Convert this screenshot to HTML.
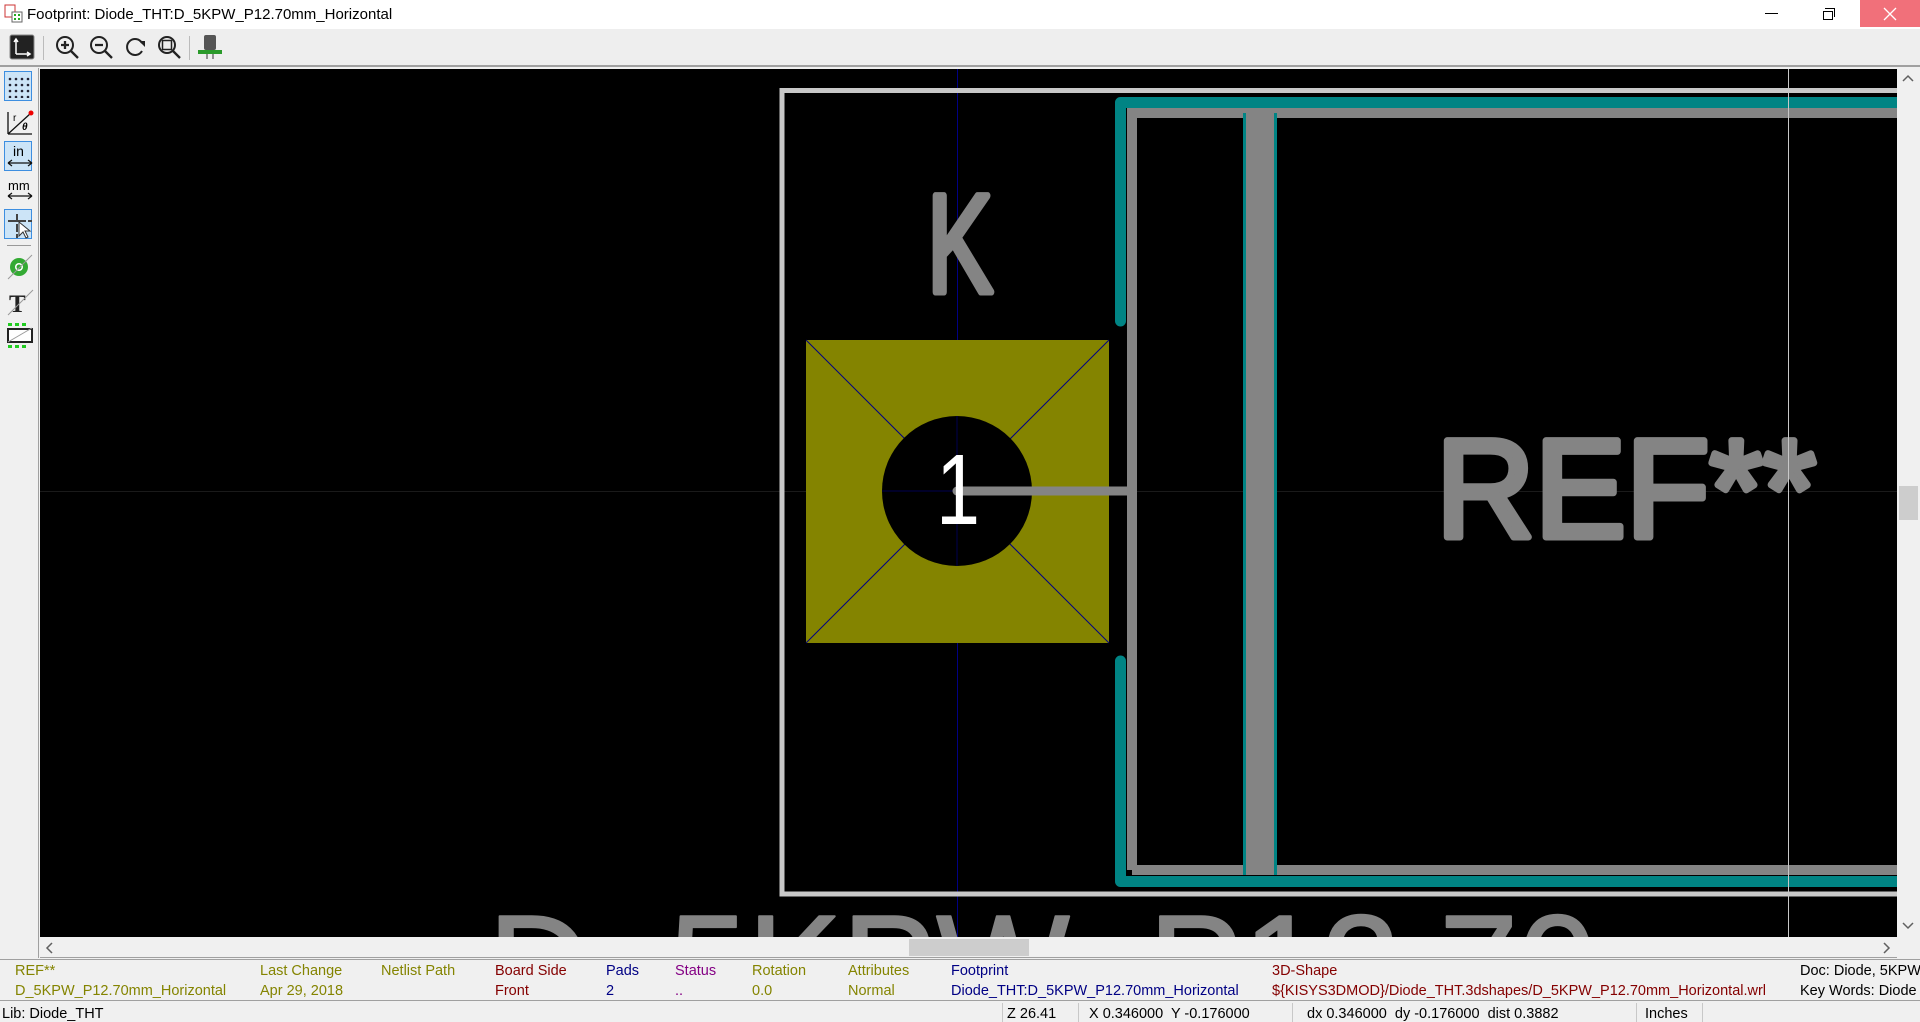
<!DOCTYPE html>
<html><head><meta charset="utf-8">
<style>
*{margin:0;padding:0;box-sizing:border-box}
body{width:1920px;height:1022px;overflow:hidden;background:#f0f0f0;font-family:"Liberation Sans",sans-serif;position:relative}
.abs{position:absolute}
.title{left:0;top:0;width:1920px;height:29px;background:#fff}
.title span{position:absolute;left:27px;top:6px;font-size:15px;color:#000}
.tb{left:0;top:29px;width:1920px;height:38px;background:#eeeeee;border-bottom:2px solid #a0a0a0}
.lt{left:0;top:68px;width:39px;height:890px;background:#f0f0f0;border-right:1px solid #a0a0a0}
.sel{position:absolute;left:4px;width:28px;height:30px;background:#cce4f7;border:1px solid #3d8ee0}
.st{position:absolute;font-size:14.5px;white-space:nowrap}
</style></head><body>
<div class="abs title">
 <svg class="abs" style="left:4px;top:4px" width="20" height="20"><rect x="1" y="1" width="10" height="12" fill="none" stroke="#c33" stroke-width="1"/><rect x="8" y="8" width="10" height="10" fill="#fff" stroke="#666"/><rect x="10" y="10" width="2" height="2" fill="#2a2"/><rect x="14" y="10" width="2" height="2" fill="#2a2"/><rect x="10" y="14" width="2" height="2" fill="#2a2"/><rect x="14" y="14" width="2" height="2" fill="#2a2"/></svg>
 <span>Footprint: Diode_THT:D_5KPW_P12.70mm_Horizontal</span>
 <div class="abs" style="left:1765px;top:13px;width:13px;height:1px;background:#000"></div>
 <div class="abs" style="left:1823px;top:11px;width:10px;height:9px;border:1px solid #000;background:#fff"></div>
 <div class="abs" style="left:1825px;top:8px;width:10px;height:9px;border-top:1px solid #000;border-right:1px solid #000"></div>
 <div class="abs" style="left:1860px;top:0;width:60px;height:27px;background:#f1707a"></div>
 <svg class="abs" style="left:1882px;top:6px" width="16" height="16"><path d="M2 2L14 14M14 2L2 14" stroke="#fff" stroke-width="1.3"/></svg>
</div>
<div class="abs tb">
 <svg class="abs" style="left:9px;top:5px" width="26" height="26"><rect x="1" y="1" width="24" height="24" rx="2" fill="#222" stroke="#888"/><path d="M7 20V6M5 8l2-3 2 3M7 20h13M18 18l3 2-3 2" stroke="#fff" stroke-width="1.5" fill="none"/></svg>
 <div class="abs" style="left:43px;top:7px;width:1px;height:24px;background:#bbb"></div>
 <svg class="abs" style="left:55px;top:6px" width="26" height="26"><circle cx="10" cy="10" r="8" fill="none" stroke="#222" stroke-width="2"/><path d="M16 16l7 7M6 10h8M10 6v8" stroke="#222" stroke-width="2.3"/></svg>
 <svg class="abs" style="left:89px;top:6px" width="26" height="26"><circle cx="10" cy="10" r="8" fill="none" stroke="#222" stroke-width="2"/><path d="M16 16l7 7M6 10h8" stroke="#222" stroke-width="2.3"/></svg>
 <svg class="abs" style="left:123px;top:6px" width="26" height="26"><path d="M19 8A8 8 0 1 0 19 16" fill="none" stroke="#222" stroke-width="2"/><path d="M16 6h6v6z" fill="#222"/></svg>
 <svg class="abs" style="left:157px;top:6px" width="26" height="26"><circle cx="10" cy="10" r="8" fill="none" stroke="#222" stroke-width="2"/><rect x="5.5" y="5.5" width="9" height="9" fill="none" stroke="#222" stroke-width="1.5"/><path d="M16 16l7 7" stroke="#222" stroke-width="2.3"/></svg>
 <div class="abs" style="left:189px;top:7px;width:1px;height:24px;background:#bbb"></div>
 <svg class="abs" style="left:196px;top:4px" width="28" height="28"><rect x="8" y="2" width="12" height="15" rx="2" fill="#555"/><rect x="2" y="17" width="24" height="4" fill="#2a9a2a"/><path d="M11 21v5M17 21v5" stroke="#333"/></svg>
</div>
<div class="abs lt">
 <div class="sel" style="top:3px"></div>
 <svg class="abs" style="left:7px;top:8px" width="24" height="22"><g fill="#223">
  <circle cx="3" cy="3" r="1.3"/><circle cx="9" cy="3" r="1.3"/><circle cx="15" cy="3" r="1.3"/><circle cx="21" cy="3" r="1.3"/>
  <circle cx="3" cy="9" r="1.3"/><circle cx="9" cy="9" r="1.3"/><circle cx="15" cy="9" r="1.3"/><circle cx="21" cy="9" r="1.3"/>
  <circle cx="3" cy="15" r="1.3"/><circle cx="9" cy="15" r="1.3"/><circle cx="15" cy="15" r="1.3"/><circle cx="21" cy="15" r="1.3"/>
  <circle cx="3" cy="21" r="1.3"/><circle cx="9" cy="21" r="1.3"/><circle cx="15" cy="21" r="1.3"/><circle cx="21" cy="21" r="1.3"/></g></svg>
 <svg class="abs" style="left:6px;top:42px" width="28" height="26"><path d="M2 24V2M2 24h24M2 24L25 3" stroke="#111" stroke-width="1.3" fill="none"/><circle cx="25" cy="3" r="2.5" fill="#e00"/><text x="7" y="11" font-size="10" font-family="Liberation Sans">r</text><text x="16" y="20" font-size="10" font-weight="bold" font-style="italic">θ</text></svg>
 <div class="sel" style="top:73px"></div>
 <svg class="abs" style="left:6px;top:74px" width="28" height="28"><text x="7" y="14" font-size="14" font-family="Liberation Sans">in</text><path d="M2 21h24M2 21l4-3M2 21l4 3M26 21l-4-3M26 21l-4 3" stroke="#111" stroke-width="1.2" fill="none"/></svg>
 <svg class="abs" style="left:6px;top:110px" width="28" height="26"><text x="2" y="12" font-size="13" font-family="Liberation Sans">mm</text><path d="M2 18h24M2 18l4-3M2 18l4 3M26 18l-4-3M26 18l-4 3" stroke="#111" stroke-width="1.2" fill="none"/></svg>
 <div class="sel" style="top:141px"></div>
 <svg class="abs" style="left:6px;top:144px" width="28" height="28"><path d="M2 9h24M11 2v24" stroke="#444" stroke-width="2" stroke-dasharray="8 2"/><path d="M13 10v14l4-4 3 6 2-1-3-6h5z" fill="#fff" stroke="#333"/></svg>
 <div class="abs" style="left:7px;top:177px;width:24px;height:1px;background:#999"></div>
 <svg class="abs" style="left:6px;top:186px" width="28" height="26"><circle cx="13" cy="13" r="9" fill="#3a3"/><circle cx="13" cy="13" r="4" fill="#fff"/><circle cx="13" cy="13" r="2.5" fill="#3a3"/><path d="M2 25L26 1" stroke="#999"/></svg>
 <svg class="abs" style="left:6px;top:220px" width="28" height="28"><text x="3" y="24" font-size="25" font-family="Liberation Serif" font-weight="bold" fill="#222">T</text><path d="M2 27L27 2" stroke="#999"/></svg>
 <svg class="abs" style="left:6px;top:254px" width="28" height="28"><g fill="#2c2"><rect x="2" y="1" width="4" height="3"/><rect x="9" y="1" width="4" height="3"/><rect x="16" y="1" width="4" height="3"/><rect x="2" y="23" width="4" height="3"/><rect x="9" y="23" width="4" height="3"/><rect x="16" y="23" width="4" height="3"/></g><rect x="2" y="7" width="24" height="13" fill="#fff" stroke="#222" stroke-width="2"/><path d="M2 20L26 6" stroke="#999"/></svg>
</div>

<svg class="abs" style="left:40px;top:69px" width="1857" height="868" viewBox="40 69 1857 868">
 <rect x="40" y="69" width="1857" height="868" fill="#000"/>
 <line x1="40" y1="491.5" x2="1897" y2="491.5" stroke="#1a1a1a" stroke-width="1"/>
 <line x1="957.5" y1="69" x2="957.5" y2="937" stroke="#000084" stroke-width="1"/>
 <rect x="782" y="90.5" width="1200" height="803.5" fill="none" stroke="#c8c8c8" stroke-width="5"/>
 <rect x="806" y="340" width="303" height="303" fill="#848400"/>
 <path d="M806 340L1109 643M1109 340L806 643" stroke="#000084" stroke-width="1"/>
 <circle cx="957" cy="491" r="75" fill="#000"/>
 <path d="M957 416V566M882 491H1032" stroke="#000084" stroke-width="1" opacity="0.6"/>
 <path d="M1120.5 321V102.5H1900M1120.5 661V881.5H1900" fill="none" stroke="#008484" stroke-width="11" stroke-linecap="round" stroke-linejoin="round"/>
 <path d="M1132 870V113H1900M1132 870H1900" fill="none" stroke="#848484" stroke-width="10"/>
 <rect x="1243" y="113" width="34" height="762" fill="#008484"/>
 <rect x="1246" y="113" width="28" height="762" fill="#848484"/>
 <line x1="957" y1="491" x2="1132" y2="491" stroke="#848484" stroke-width="9" stroke-linecap="round"/>
 <text x="936" y="524" font-size="100" font-family="Liberation Sans" fill="#fff" textLength="44" lengthAdjust="spacingAndGlyphs">1</text>
 <g font-family="Liberation Sans" fill="#848484" stroke="#848484" stroke-width="7" stroke-linejoin="round">
 <text x="927" y="292" font-size="140" textLength="66" lengthAdjust="spacingAndGlyphs">K</text>
 <text x="1436" y="537" font-size="140" textLength="380" lengthAdjust="spacingAndGlyphs">REF**</text>
 <text x="488" y="1016" font-size="145" stroke-width="2" textLength="2060" lengthAdjust="spacingAndGlyphs">D_5KPW_P12.70mm_Horizontal</text>
 </g>
 <line x1="1788.5" y1="69" x2="1788.5" y2="937" stroke="#c8c8c8" stroke-width="1"/>
</svg>

<div class="abs" style="left:1897px;top:69px;width:23px;height:868px;background:#f0f0f0"></div>
<div class="abs" style="left:1899px;top:486px;width:19px;height:34px;background:#cdcdcd"></div>
<svg class="abs" style="left:1901px;top:72px" width="14" height="12"><path d="M2 9l5-5 5 5" stroke="#606060" stroke-width="1.5" fill="none"/></svg>
<svg class="abs" style="left:1901px;top:920px" width="14" height="12"><path d="M2 3l5 5 5-5" stroke="#606060" stroke-width="1.5" fill="none"/></svg>
<div class="abs" style="left:40px;top:937px;width:1857px;height:21px;background:#f0f0f0;border-bottom:1px solid #a0a0a0"></div>
<div class="abs" style="left:909px;top:939px;width:120px;height:17px;background:#cdcdcd"></div>
<svg class="abs" style="left:44px;top:941px" width="12" height="14"><path d="M8 2L3 7l5 5" stroke="#606060" stroke-width="1.5" fill="none"/></svg>
<svg class="abs" style="left:1880px;top:941px" width="12" height="14"><path d="M4 2l5 5-5 5" stroke="#606060" stroke-width="1.5" fill="none"/></svg>

<div class="abs" style="left:0;top:959px;width:1920px;height:42px;background:#f0f0f0;border-top:1px solid #a0a0a0;border-bottom:1px solid #a0a0a0"></div>
<div class="st" style="left:15px;top:963px;color:#848400">REF**</div>
<div class="st" style="left:15px;top:983px;color:#848400">D_5KPW_P12.70mm_Horizontal</div>
<div class="st" style="left:260px;top:963px;color:#848400">Last Change</div>
<div class="st" style="left:260px;top:983px;color:#848400">Apr 29, 2018</div>
<div class="st" style="left:381px;top:963px;color:#848400">Netlist Path</div>
<div class="st" style="left:495px;top:963px;color:#840000">Board Side</div>
<div class="st" style="left:495px;top:983px;color:#840000">Front</div>
<div class="st" style="left:606px;top:963px;color:#000084">Pads</div>
<div class="st" style="left:606px;top:983px;color:#000084">2</div>
<div class="st" style="left:675px;top:963px;color:#840084">Status</div>
<div class="st" style="left:675px;top:983px;color:#840084">..</div>
<div class="st" style="left:752px;top:963px;color:#848400">Rotation</div>
<div class="st" style="left:752px;top:983px;color:#848400">0.0</div>
<div class="st" style="left:848px;top:963px;color:#848400">Attributes</div>
<div class="st" style="left:848px;top:983px;color:#848400">Normal</div>
<div class="st" style="left:951px;top:963px;color:#000084">Footprint</div>
<div class="st" style="left:951px;top:983px;color:#000084">Diode_THT:D_5KPW_P12.70mm_Horizontal</div>
<div class="st" style="left:1272px;top:963px;color:#840000">3D-Shape</div>
<div class="st" style="left:1272px;top:983px;color:#840000">${KISYS3DMOD}/Diode_THT.3dshapes/D_5KPW_P12.70mm_Horizontal.wrl</div>
<div class="st" style="left:1800px;top:963px;color:#000">Doc: Diode, 5KPW</div>
<div class="st" style="left:1800px;top:983px;color:#000">Key Words: Diode</div>
<div class="st" style="left:2px;top:1006px;color:#000">Lib: Diode_THT</div>
<div class="abs" style="left:1002px;top:1003px;width:1px;height:19px;background:#c8c8c8"></div>
<div class="st" style="left:1007px;top:1006px">Z 26.41</div>
<div class="abs" style="left:1078px;top:1003px;width:1px;height:19px;background:#c8c8c8"></div>
<div class="st" style="left:1089px;top:1006px">X 0.346000&nbsp; Y -0.176000</div>
<div class="abs" style="left:1292px;top:1003px;width:1px;height:19px;background:#c8c8c8"></div>
<div class="st" style="left:1307px;top:1006px">dx 0.346000&nbsp; dy -0.176000&nbsp; dist 0.3882</div>
<div class="abs" style="left:1636px;top:1003px;width:1px;height:19px;background:#c8c8c8"></div>
<div class="st" style="left:1645px;top:1006px">Inches</div>
<div class="abs" style="left:1702px;top:1003px;width:1px;height:19px;background:#c8c8c8"></div>
</body></html>
